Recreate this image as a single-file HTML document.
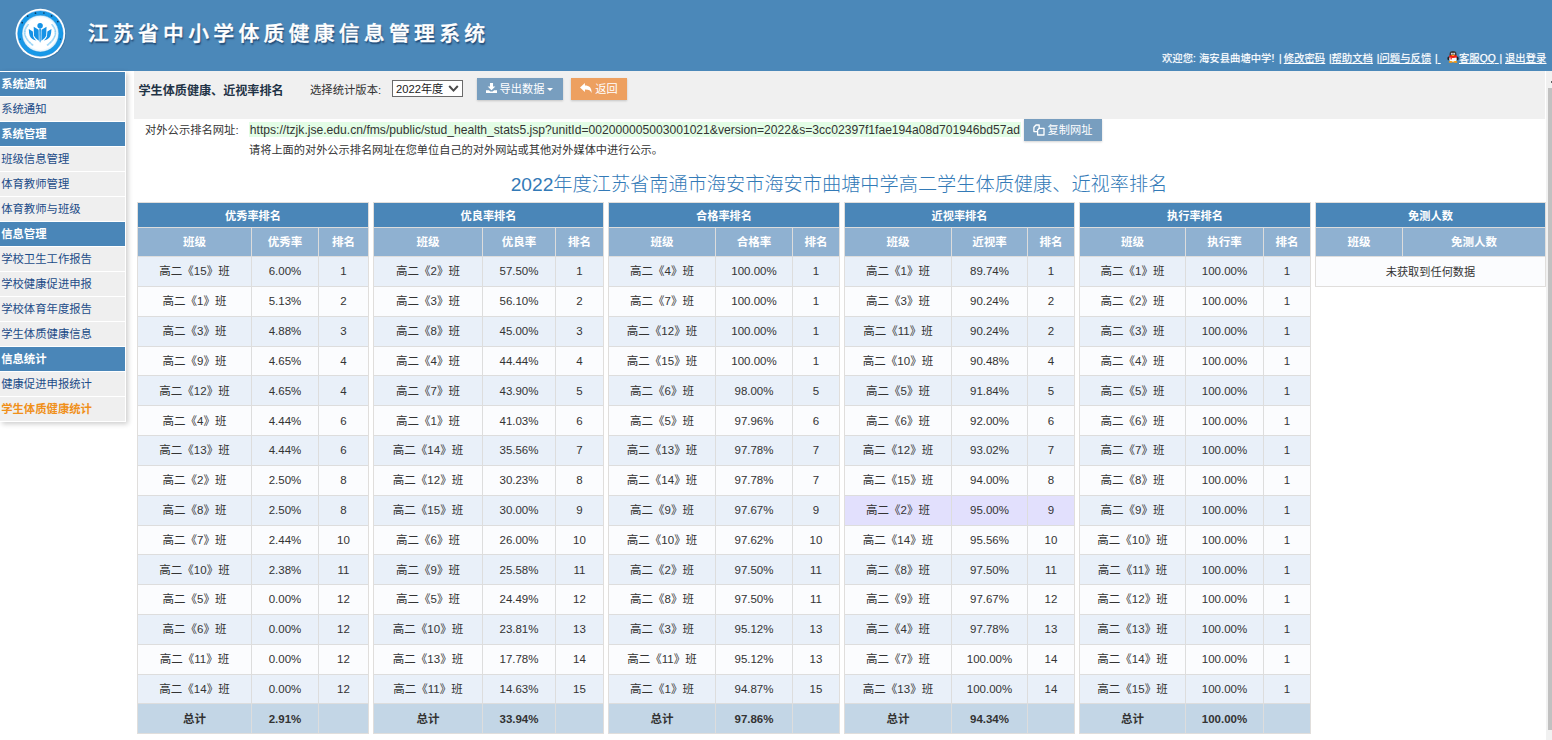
<!DOCTYPE html>
<html lang="zh-CN">
<head>
<meta charset="utf-8">
<title>江苏省中小学体质健康信息管理系统</title>
<style>
*{box-sizing:border-box;margin:0;padding:0}
html,body{width:1552px;height:740px;overflow:hidden;background:#fff}
body{position:relative;font-family:"Liberation Sans","Noto Sans CJK SC",sans-serif;font-size:11.2px;color:#333}
#hdr{position:absolute;left:0;top:0;width:1552px;height:71px;background:#4b88b9}
#logo{position:absolute;left:13px;top:6px;width:55px;height:55px}
#ttl{position:absolute;left:87.800px;top:17px;height:34px;line-height:34px;font-size:20.8px;font-weight:500;-webkit-text-stroke:.4px #fff;letter-spacing:4.300px;color:#fff;white-space:nowrap;text-shadow:1px 1.5px 1.5px rgba(20,50,90,.75)}
#usr{position:absolute;left:0;top:0;font-size:10.35px;color:#fff;white-space:nowrap;text-shadow:0 0 1px rgba(255,255,255,.6)}
#usr u{text-decoration:underline}
#usr span{position:absolute;top:51.400px;height:16px;line-height:16px}
#side{position:absolute;left:0;top:71px;width:126px;height:351px;background:#fff;border-right:1px solid #fff;box-shadow:2px 2px 5px rgba(0,0,0,.2)}
#side div{height:24px;margin-top:1px;line-height:25px;padding-left:1.200px;white-space:nowrap;font-size:11.35px}
.sh{background:#4a86b8;color:#fff;font-weight:bold}
.si{background:#efefef;color:#1c4c88}
.sa{background:#efefef;color:#f0901a;font-weight:bold}
#bar{position:absolute;left:134px;top:71px;width:1411px;height:48px;background:#f0f0f0}
#bt{position:absolute;left:138.500px;top:81.500px;height:18px;line-height:18px;font-size:12.1px;font-weight:bold;color:#1f3346;white-space:nowrap}
#lb{position:absolute;left:310px;top:81px;height:18px;line-height:18px;font-size:11.35px;color:#333;white-space:nowrap}
#sel{position:absolute;left:392px;top:80px;width:71px;height:17px;border:1px solid #6a6a6a;background:#fff;border-radius:0;font-size:11.2px;line-height:17px;padding-left:3px;color:#222;white-space:nowrap}
#sel svg{position:absolute;left:54.500px;top:2.500px}
.btn{position:absolute;top:78px;height:22px;line-height:23px;color:#fff;font-size:11.2px;white-space:nowrap;box-shadow:0 1px 2px rgba(0,0,0,.18);text-align:center}
#b1{left:477px;width:86px;background:#789ebf}
#b2{left:571px;width:56px;background:#eda060}
#b3{left:1024px;top:119px;width:78px;background:#789ebf}
#ul{position:absolute;left:145px;top:121px;height:18px;line-height:18px;white-space:nowrap;font-size:11.3px}
#url{position:absolute;left:249px;top:122px;height:15px;line-height:16px;width:772px;background:#e3fde6;white-space:nowrap;font-size:12.13px;color:#333;padding-left:.8px;overflow:hidden}
#tip{position:absolute;left:249px;top:141px;height:18px;line-height:18px;white-space:nowrap;font-size:11.2px}
#h1{position:absolute;left:134px;width:1410px;top:169.500px;height:30px;line-height:30px;text-align:center;font-size:19.2px;font-weight:300;color:#337ab7;white-space:nowrap}
.tb{position:absolute;top:202.00px;border:1px solid #e0dedc;background:#ddd;font-size:11.5px}
.tt{height:24.00px;line-height:24.00px;padding-top:.6px;background:#4a86b8;color:#fff;font-weight:bold;text-align:center;font-size:11.2px}
.r{display:grid;height:29.82px;line-height:29.82px;text-align:center;white-space:nowrap}
.r>div{border-top:1px solid #ddd;border-left:1px solid #ddd;overflow:hidden;padding-top:.3px}
.r>div:first-child{border-left:none}
.th{height:29.20px;line-height:29.20px;color:#fff;font-weight:bold}
.th>div{background:#8fb1d1;border-color:#dcdcdc;padding-top:.2px}
.o>div{background:#e9f0f9}
.e>div{background:#fbfcfe}
.hv>div{background:#e2e0fd}
.tot{font-weight:bold;height:30px}
.tot>div{background:#c3d6e6}
.nodata{display:block;font-size:11.2px}
.nodata>div{height:100%;padding-top:1.300px}
#sbt{position:absolute;left:1546px;top:71px;width:6px;height:669px;background:#f1f1f1}
#sbh{position:absolute;left:1548px;top:88px;width:4px;height:642px;background:#c1c1c1}
</style>
</head>
<body>
<div id="hdr">
<svg id="logo" viewBox="0 0 55 55">
<defs><radialGradient id="lg" cx="50%" cy="50%" r="50%"><stop offset="0" stop-color="#fff"/><stop offset=".86" stop-color="#fff"/><stop offset="1" stop-color="#cdebfc"/></radialGradient></defs>
<circle cx="28.1" cy="28.4" r="24.8" fill="#1f4d7a" opacity=".35"/>
<circle cx="27.4" cy="27.6" r="24.8" fill="#fff"/>
<circle cx="27.4" cy="27.6" r="22.7" fill="#1899e8" stroke="#1a7fd0" stroke-width=".5"/>
<circle cx="27.4" cy="27.6" r="18.4" fill="url(#lg)" stroke="#1683d0" stroke-width=".4"/>
<g fill="#0e2f4d" opacity=".9"><circle cx="9.2" cy="16.700" r=".85"/><circle cx="14.7" cy="10.100" r=".85"/><circle cx="22.5" cy="7.200" r=".85"/><circle cx="30.9" cy="7" r=".85"/><circle cx="38.6" cy="9.900" r=".85"/><circle cx="44.8" cy="15.600" r=".85"/><circle cx="7.2" cy="33.100" r=".7"/><circle cx="47.3" cy="33.100" r=".7"/></g>
<g fill="#1592e6" transform="translate(27.1 27.6) scale(1.07) translate(-27.1 -27.300)">
<circle cx="27.1" cy="19.900" r="2.550"/>
<path d="M26.350 22.600 L27.850 22.600 L27.650 34.200 L27.100 35.800 L26.550 34.200 Z"/>
<path d="M21.100 20.900 L25.750 23.800 L25.900 33.900 Q22.500 31.900 21.400 29.200 Z"/>
<path d="M33.100 20.900 L28.450 23.800 L28.300 33.900 Q31.700 31.900 32.800 29.200 Z"/>
<path d="M16.500 23 L20.300 25.400 L20.700 30 Q21.600 32.200 23.700 33.800 Q19.300 33.200 17.500 29.600 Q16.600 27 16.500 23 Z"/>
<path d="M37.700 23 L33.900 25.400 L33.500 30 Q32.600 32.200 30.500 33.800 Q34.900 33.200 36.700 29.600 Q37.600 27 37.700 23 Z"/>
</g>
<path d="M15.500 18.200 Q6.100 28.800 20.200 39.400" stroke="#7cc8f4" stroke-width="1.700" fill="none" stroke-dasharray=".6 .25"/>
<path d="M38.700 18.200 Q48.100 28.800 34 39.400" stroke="#7cc8f4" stroke-width="1.700" fill="none" stroke-dasharray=".6 .25"/>
</svg>
<div id="ttl">江苏省中小学体质健康信息管理系统</div>
<div id="usr"><span style="left:1162px">欢迎您:</span><span style="left:1199px">海安县曲塘中学!</span><span style="left:1279px">|</span><span style="left:1283.800px"><u>修改密码</u></span><span style="left:1329px">|</span><span style="left:1331.500px"><u>帮助文档</u></span><span style="left:1376.800px">|</span><span style="left:1379.500px"><u>问题与反馈</u></span><span style="left:1435px">|<u>&nbsp;</u></span><svg width="12" height="12" viewBox="0 0 12 12" style="position:absolute;left:1447.300px;top:50.500px"><ellipse cx="1.500" cy="7.400" rx="1.100" ry="1.900" fill="#222"/><ellipse cx="10.500" cy="7.400" rx="1.100" ry="1.900" fill="#222"/><ellipse cx="6" cy="3.400" rx="3.500" ry="3.300" fill="#3c3c3c"/><ellipse cx="6" cy="8" rx="3.700" ry="3" fill="#fafafa"/><ellipse cx="4.900" cy="2.700" rx=".8" ry="1" fill="#fff"/><ellipse cx="7.100" cy="2.700" rx=".8" ry="1" fill="#fff"/><path d="M2.200 4.600 Q6 3.600 9.800 4.600 L10.100 6.300 Q6 7.600 1.900 6.300Z" fill="#f21d14"/><path d="M3.500 6.500h1.300v2h-1.300z" fill="#f21d14"/><ellipse cx="6" cy="4.400" rx="1.500" ry=".65" fill="#ff9c0a"/><ellipse cx="3.700" cy="10.900" rx="2.100" ry=".95" fill="#ff9c0a"/><ellipse cx="8.300" cy="10.900" rx="2.100" ry=".95" fill="#ff9c0a"/></svg><span style="left:1459px"><u>客服QQ&nbsp;</u></span><span style="left:1499.600px">|</span><span style="left:1505px"><u>退出登录</u></span></div>
</div>
<div id="side">
<div class="sh">系统通知</div>
<div class="si">系统通知</div>
<div class="sh">系统管理</div>
<div class="si">班级信息管理</div>
<div class="si">体育教师管理</div>
<div class="si">体育教师与班级</div>
<div class="sh">信息管理</div>
<div class="si">学校卫生工作报告</div>
<div class="si">学校健康促进申报</div>
<div class="si">学校体育年度报告</div>
<div class="si">学生体质健康信息</div>
<div class="sh">信息统计</div>
<div class="si">健康促进申报统计</div>
<div class="sa">学生体质健康统计</div>
</div>
<div id="bar"></div>
<div id="bt">学生体质健康、近视率排名</div>
<div id="lb">选择统计版本:</div>
<div id="sel">2022年度<svg width="11" height="9" viewBox="0 0 11 9"><path d="M1.200 2 L5.500 6.600 L9.800 2" stroke="#4a4a4a" stroke-width="2" fill="none"/></svg></div>
<div class="btn" id="b1"><svg width="11" height="10" viewBox="0 0 10 10" preserveAspectRatio="none" style="vertical-align:0;margin-right:3px;margin-left:-1px"><path d="M3.600 0h2.800v3.600h2.100L5 7.200 1.500 3.600h2.100z M0 7.300h2.600l1.400 1.300h2l1.400-1.300H10V10H0z" fill="#fff"/></svg>导出数据<svg width="6" height="3" viewBox="0 0 7 4" preserveAspectRatio="none" style="vertical-align:2.500px;margin-left:3px"><path d="M0 0h7L3.500 4z" fill="#fff"/></svg></div>
<div class="btn" id="b2"><svg width="12" height="10" viewBox="0 0 11 10" preserveAspectRatio="none" style="vertical-align:0;margin-right:3px"><path d="M4.500 0v2.400C8.500 2.400 11 4.800 10.600 10 9.800 7.300 8 6.300 4.500 6.400v2.500L0 4.400z" fill="#fff"/></svg>返回</div>
<div id="ul">对外公示排名网址:</div>
<div id="url">https://tzjk.jse.edu.cn/fms/public/stud_health_stats5.jsp?unitId=002000005003001021&amp;version=2022&amp;s=3cc02397f1fae194a08d701946bd57ad</div>
<div class="btn" id="b3"><svg width="12" height="12" viewBox="0 0 12 12" style="vertical-align:-2px;margin-right:3px;margin-left:-1px"><path d="M.9 3.300 L3 1 H6.200 V7.600 H.9z" stroke="#fff" stroke-width="1.300" fill="none" stroke-linejoin="round"/><path d="M4.600 6 L6.400 4.300 H11 V11 H4.600z" stroke="#fff" stroke-width="1.300" fill="#789ebf" stroke-linejoin="round"/></svg>复制网址</div>
<div id="tip">请将上面的对外公示排名网址在您单位自己的对外网站或其他对外媒体中进行公示。</div>
<div id="h1">2022年度江苏省南通市海安市海安市曲塘中学高二学生体质健康、近视率排名</div>
<div class="tb" style="left:137.00px;width:232.00px">
<div class="tt">优秀率排名</div>
<div class="r th" style="grid-template-columns:113.00px 67.00px 50.00px"><div>班级</div><div>优秀率</div><div>排名</div></div>
<div class="r o" style="grid-template-columns:113.00px 67.00px 50.00px"><div>高二《15》班</div><div>6.00%</div><div>1</div></div>
<div class="r e" style="grid-template-columns:113.00px 67.00px 50.00px"><div>高二《1》班</div><div>5.13%</div><div>2</div></div>
<div class="r o" style="grid-template-columns:113.00px 67.00px 50.00px"><div>高二《3》班</div><div>4.88%</div><div>3</div></div>
<div class="r e" style="grid-template-columns:113.00px 67.00px 50.00px"><div>高二《9》班</div><div>4.65%</div><div>4</div></div>
<div class="r o" style="grid-template-columns:113.00px 67.00px 50.00px"><div>高二《12》班</div><div>4.65%</div><div>4</div></div>
<div class="r e" style="grid-template-columns:113.00px 67.00px 50.00px"><div>高二《4》班</div><div>4.44%</div><div>6</div></div>
<div class="r o" style="grid-template-columns:113.00px 67.00px 50.00px"><div>高二《13》班</div><div>4.44%</div><div>6</div></div>
<div class="r e" style="grid-template-columns:113.00px 67.00px 50.00px"><div>高二《2》班</div><div>2.50%</div><div>8</div></div>
<div class="r o" style="grid-template-columns:113.00px 67.00px 50.00px"><div>高二《8》班</div><div>2.50%</div><div>8</div></div>
<div class="r e" style="grid-template-columns:113.00px 67.00px 50.00px"><div>高二《7》班</div><div>2.44%</div><div>10</div></div>
<div class="r o" style="grid-template-columns:113.00px 67.00px 50.00px"><div>高二《10》班</div><div>2.38%</div><div>11</div></div>
<div class="r e" style="grid-template-columns:113.00px 67.00px 50.00px"><div>高二《5》班</div><div>0.00%</div><div>12</div></div>
<div class="r o" style="grid-template-columns:113.00px 67.00px 50.00px"><div>高二《6》班</div><div>0.00%</div><div>12</div></div>
<div class="r e" style="grid-template-columns:113.00px 67.00px 50.00px"><div>高二《11》班</div><div>0.00%</div><div>12</div></div>
<div class="r o" style="grid-template-columns:113.00px 67.00px 50.00px"><div>高二《14》班</div><div>0.00%</div><div>12</div></div>
<div class="r tot" style="grid-template-columns:113.00px 67.00px 50.00px"><div>总计</div><div>2.91%</div><div></div></div>
</div>
<div class="tb" style="left:373.00px;width:231.00px">
<div class="tt">优良率排名</div>
<div class="r th" style="grid-template-columns:108.00px 73.00px 48.00px"><div>班级</div><div>优良率</div><div>排名</div></div>
<div class="r o" style="grid-template-columns:108.00px 73.00px 48.00px"><div>高二《2》班</div><div>57.50%</div><div>1</div></div>
<div class="r e" style="grid-template-columns:108.00px 73.00px 48.00px"><div>高二《3》班</div><div>56.10%</div><div>2</div></div>
<div class="r o" style="grid-template-columns:108.00px 73.00px 48.00px"><div>高二《8》班</div><div>45.00%</div><div>3</div></div>
<div class="r e" style="grid-template-columns:108.00px 73.00px 48.00px"><div>高二《4》班</div><div>44.44%</div><div>4</div></div>
<div class="r o" style="grid-template-columns:108.00px 73.00px 48.00px"><div>高二《7》班</div><div>43.90%</div><div>5</div></div>
<div class="r e" style="grid-template-columns:108.00px 73.00px 48.00px"><div>高二《1》班</div><div>41.03%</div><div>6</div></div>
<div class="r o" style="grid-template-columns:108.00px 73.00px 48.00px"><div>高二《14》班</div><div>35.56%</div><div>7</div></div>
<div class="r e" style="grid-template-columns:108.00px 73.00px 48.00px"><div>高二《12》班</div><div>30.23%</div><div>8</div></div>
<div class="r o" style="grid-template-columns:108.00px 73.00px 48.00px"><div>高二《15》班</div><div>30.00%</div><div>9</div></div>
<div class="r e" style="grid-template-columns:108.00px 73.00px 48.00px"><div>高二《6》班</div><div>26.00%</div><div>10</div></div>
<div class="r o" style="grid-template-columns:108.00px 73.00px 48.00px"><div>高二《9》班</div><div>25.58%</div><div>11</div></div>
<div class="r e" style="grid-template-columns:108.00px 73.00px 48.00px"><div>高二《5》班</div><div>24.49%</div><div>12</div></div>
<div class="r o" style="grid-template-columns:108.00px 73.00px 48.00px"><div>高二《10》班</div><div>23.81%</div><div>13</div></div>
<div class="r e" style="grid-template-columns:108.00px 73.00px 48.00px"><div>高二《13》班</div><div>17.78%</div><div>14</div></div>
<div class="r o" style="grid-template-columns:108.00px 73.00px 48.00px"><div>高二《11》班</div><div>14.63%</div><div>15</div></div>
<div class="r tot" style="grid-template-columns:108.00px 73.00px 48.00px"><div>总计</div><div>33.94%</div><div></div></div>
</div>
<div class="tb" style="left:608.00px;width:232.00px">
<div class="tt">合格率排名</div>
<div class="r th" style="grid-template-columns:106.00px 77.00px 47.00px"><div>班级</div><div>合格率</div><div>排名</div></div>
<div class="r o" style="grid-template-columns:106.00px 77.00px 47.00px"><div>高二《4》班</div><div>100.00%</div><div>1</div></div>
<div class="r e" style="grid-template-columns:106.00px 77.00px 47.00px"><div>高二《7》班</div><div>100.00%</div><div>1</div></div>
<div class="r o" style="grid-template-columns:106.00px 77.00px 47.00px"><div>高二《12》班</div><div>100.00%</div><div>1</div></div>
<div class="r e" style="grid-template-columns:106.00px 77.00px 47.00px"><div>高二《15》班</div><div>100.00%</div><div>1</div></div>
<div class="r o" style="grid-template-columns:106.00px 77.00px 47.00px"><div>高二《6》班</div><div>98.00%</div><div>5</div></div>
<div class="r e" style="grid-template-columns:106.00px 77.00px 47.00px"><div>高二《5》班</div><div>97.96%</div><div>6</div></div>
<div class="r o" style="grid-template-columns:106.00px 77.00px 47.00px"><div>高二《13》班</div><div>97.78%</div><div>7</div></div>
<div class="r e" style="grid-template-columns:106.00px 77.00px 47.00px"><div>高二《14》班</div><div>97.78%</div><div>7</div></div>
<div class="r o" style="grid-template-columns:106.00px 77.00px 47.00px"><div>高二《9》班</div><div>97.67%</div><div>9</div></div>
<div class="r e" style="grid-template-columns:106.00px 77.00px 47.00px"><div>高二《10》班</div><div>97.62%</div><div>10</div></div>
<div class="r o" style="grid-template-columns:106.00px 77.00px 47.00px"><div>高二《2》班</div><div>97.50%</div><div>11</div></div>
<div class="r e" style="grid-template-columns:106.00px 77.00px 47.00px"><div>高二《8》班</div><div>97.50%</div><div>11</div></div>
<div class="r o" style="grid-template-columns:106.00px 77.00px 47.00px"><div>高二《3》班</div><div>95.12%</div><div>13</div></div>
<div class="r e" style="grid-template-columns:106.00px 77.00px 47.00px"><div>高二《11》班</div><div>95.12%</div><div>13</div></div>
<div class="r o" style="grid-template-columns:106.00px 77.00px 47.00px"><div>高二《1》班</div><div>94.87%</div><div>15</div></div>
<div class="r tot" style="grid-template-columns:106.00px 77.00px 47.00px"><div>总计</div><div>97.86%</div><div></div></div>
</div>
<div class="tb" style="left:844.00px;width:231.00px">
<div class="tt">近视率排名</div>
<div class="r th" style="grid-template-columns:106.00px 76.00px 47.00px"><div>班级</div><div>近视率</div><div>排名</div></div>
<div class="r o" style="grid-template-columns:106.00px 76.00px 47.00px"><div>高二《1》班</div><div>89.74%</div><div>1</div></div>
<div class="r e" style="grid-template-columns:106.00px 76.00px 47.00px"><div>高二《3》班</div><div>90.24%</div><div>2</div></div>
<div class="r o" style="grid-template-columns:106.00px 76.00px 47.00px"><div>高二《11》班</div><div>90.24%</div><div>2</div></div>
<div class="r e" style="grid-template-columns:106.00px 76.00px 47.00px"><div>高二《10》班</div><div>90.48%</div><div>4</div></div>
<div class="r o" style="grid-template-columns:106.00px 76.00px 47.00px"><div>高二《5》班</div><div>91.84%</div><div>5</div></div>
<div class="r e" style="grid-template-columns:106.00px 76.00px 47.00px"><div>高二《6》班</div><div>92.00%</div><div>6</div></div>
<div class="r o" style="grid-template-columns:106.00px 76.00px 47.00px"><div>高二《12》班</div><div>93.02%</div><div>7</div></div>
<div class="r e" style="grid-template-columns:106.00px 76.00px 47.00px"><div>高二《15》班</div><div>94.00%</div><div>8</div></div>
<div class="r o hv" style="grid-template-columns:106.00px 76.00px 47.00px"><div>高二《2》班</div><div>95.00%</div><div>9</div></div>
<div class="r e" style="grid-template-columns:106.00px 76.00px 47.00px"><div>高二《14》班</div><div>95.56%</div><div>10</div></div>
<div class="r o" style="grid-template-columns:106.00px 76.00px 47.00px"><div>高二《8》班</div><div>97.50%</div><div>11</div></div>
<div class="r e" style="grid-template-columns:106.00px 76.00px 47.00px"><div>高二《9》班</div><div>97.67%</div><div>12</div></div>
<div class="r o" style="grid-template-columns:106.00px 76.00px 47.00px"><div>高二《4》班</div><div>97.78%</div><div>13</div></div>
<div class="r e" style="grid-template-columns:106.00px 76.00px 47.00px"><div>高二《7》班</div><div>100.00%</div><div>14</div></div>
<div class="r o" style="grid-template-columns:106.00px 76.00px 47.00px"><div>高二《13》班</div><div>100.00%</div><div>14</div></div>
<div class="r tot" style="grid-template-columns:106.00px 76.00px 47.00px"><div>总计</div><div>94.34%</div><div></div></div>
</div>
<div class="tb" style="left:1079.00px;width:232.00px">
<div class="tt">执行率排名</div>
<div class="r th" style="grid-template-columns:105.00px 78.00px 47.00px"><div>班级</div><div>执行率</div><div>排名</div></div>
<div class="r o" style="grid-template-columns:105.00px 78.00px 47.00px"><div>高二《1》班</div><div>100.00%</div><div>1</div></div>
<div class="r e" style="grid-template-columns:105.00px 78.00px 47.00px"><div>高二《2》班</div><div>100.00%</div><div>1</div></div>
<div class="r o" style="grid-template-columns:105.00px 78.00px 47.00px"><div>高二《3》班</div><div>100.00%</div><div>1</div></div>
<div class="r e" style="grid-template-columns:105.00px 78.00px 47.00px"><div>高二《4》班</div><div>100.00%</div><div>1</div></div>
<div class="r o" style="grid-template-columns:105.00px 78.00px 47.00px"><div>高二《5》班</div><div>100.00%</div><div>1</div></div>
<div class="r e" style="grid-template-columns:105.00px 78.00px 47.00px"><div>高二《6》班</div><div>100.00%</div><div>1</div></div>
<div class="r o" style="grid-template-columns:105.00px 78.00px 47.00px"><div>高二《7》班</div><div>100.00%</div><div>1</div></div>
<div class="r e" style="grid-template-columns:105.00px 78.00px 47.00px"><div>高二《8》班</div><div>100.00%</div><div>1</div></div>
<div class="r o" style="grid-template-columns:105.00px 78.00px 47.00px"><div>高二《9》班</div><div>100.00%</div><div>1</div></div>
<div class="r e" style="grid-template-columns:105.00px 78.00px 47.00px"><div>高二《10》班</div><div>100.00%</div><div>1</div></div>
<div class="r o" style="grid-template-columns:105.00px 78.00px 47.00px"><div>高二《11》班</div><div>100.00%</div><div>1</div></div>
<div class="r e" style="grid-template-columns:105.00px 78.00px 47.00px"><div>高二《12》班</div><div>100.00%</div><div>1</div></div>
<div class="r o" style="grid-template-columns:105.00px 78.00px 47.00px"><div>高二《13》班</div><div>100.00%</div><div>1</div></div>
<div class="r e" style="grid-template-columns:105.00px 78.00px 47.00px"><div>高二《14》班</div><div>100.00%</div><div>1</div></div>
<div class="r o" style="grid-template-columns:105.00px 78.00px 47.00px"><div>高二《15》班</div><div>100.00%</div><div>1</div></div>
<div class="r tot" style="grid-template-columns:105.00px 78.00px 47.00px"><div>总计</div><div>100.00%</div><div></div></div>
</div>
<div class="tb" style="left:1315.00px;width:231.00px">
<div class="tt">免测人数</div>
<div class="r th" style="grid-template-columns:86.00px 143.00px"><div>班级</div><div>免测人数</div></div>
<div class="r e nodata"><div>未获取到任何数据</div></div>
</div>
<div id="sbt"></div><div style="position:absolute;left:1551px;top:81px;width:1px;height:1.500px;background:#606060"></div><div id="sbh"></div>
</body>
</html>
